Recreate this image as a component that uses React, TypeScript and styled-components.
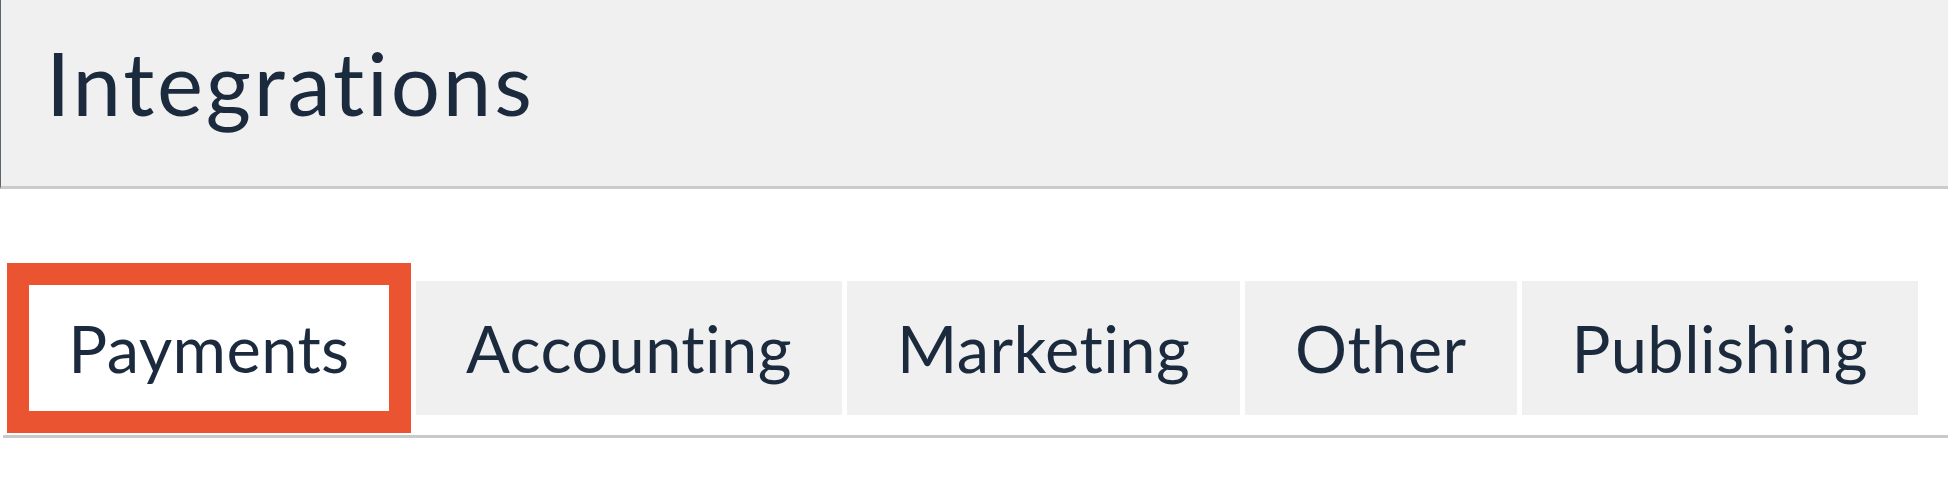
import React, { useState } from "react";
import styled, { createGlobalStyle } from "styled-components";

const GlobalStyle = createGlobalStyle`
  html, body {
    margin: 0;
    padding: 0;
    background: #ffffff;
  }

  body {
    font-family: Lato, "Noto Sans", "Liberation Sans", sans-serif;
    color: #1b2a3d;
  }
`;

const Header = styled.header`
  height: 189px;
  box-sizing: border-box;
  padding: 30px 0 0 45px;
  background: #f0f0f0;
  border-left: 1px solid #5c6470;
  border-bottom: 3px solid #cbcbcb;
`;

const Title = styled.h1`
  margin: 0;
  font-size: 87px;
  font-weight: 400;
  line-height: normal;
  letter-spacing: 2.8px;
`;

const TabBar = styled.nav`
  margin: 74px 0 0 3px;
  padding: 0 0 2px 4px;
  border-bottom: 3px solid #c9c9c9;
`;

const TabList = styled.div`
  display: flex;
  align-items: center;
  height: 170px;
`;

const Tab = styled.button`
  display: flex;
  align-items: center;
  height: 134px;
  padding: 0 50px;
  border: 0;
  background: #f0f0f0;
  color: inherit;
  font: inherit;
  font-size: 65px;
  letter-spacing: 0.4px;
  cursor: pointer;

  & + & {
    margin-left: 5px;
  }
`;

const ActiveTab = styled(Tab)`
  justify-content: center;
  width: 404px;
  height: 170px;
  box-sizing: border-box;
  padding: 0;
  background: #ffffff;
  border: 22px solid #ea5430;
`;

const tabs = ["Payments", "Accounting", "Marketing", "Other", "Publishing"];

export default function App() {
  const [active, setActive] = useState("Payments");

  return (
    <>
      <GlobalStyle />
      <Header>
        <Title>Integrations</Title>
      </Header>
      <TabBar>
        <TabList>
          {tabs.map((name) =>
            name === active ? (
              <ActiveTab key={name} onClick={() => setActive(name)}>
                {name}
              </ActiveTab>
            ) : (
              <Tab key={name} onClick={() => setActive(name)}>
                {name}
              </Tab>
            )
          )}
        </TabList>
      </TabBar>
    </>
  );
}
